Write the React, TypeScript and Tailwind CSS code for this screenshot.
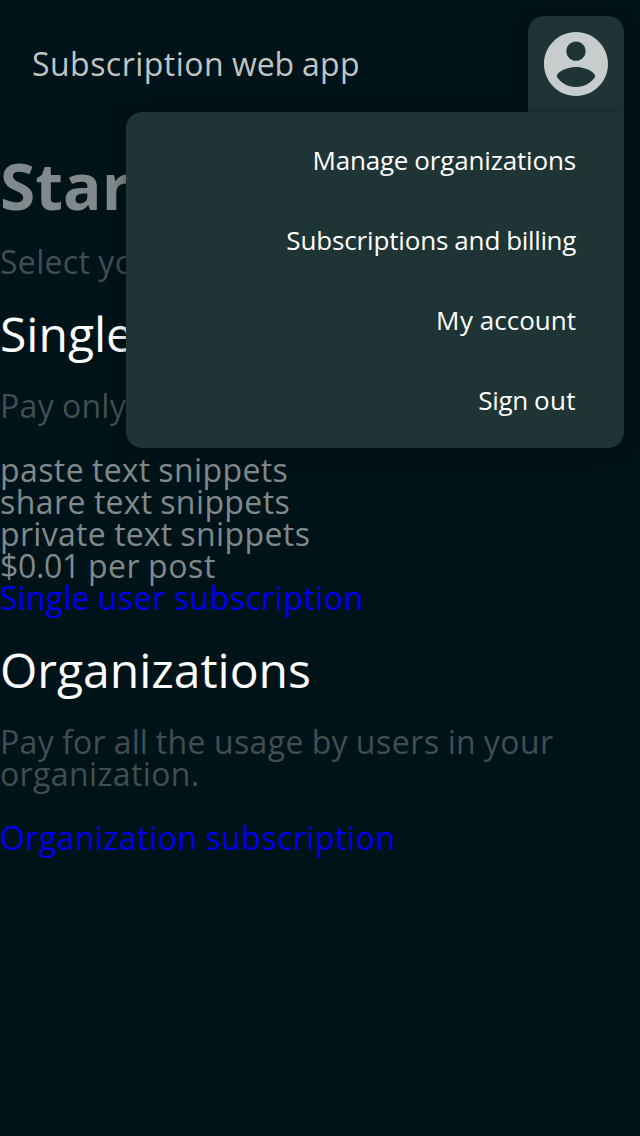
import { Fragment } from "react";

const items = ["Manage organizations", "Subscriptions and billing", "My account", "Sign out"];
const features = ["paste text snippets", "share text snippets", "private text snippets", "$0.01 per post"];

// Open Sans advance widths, in units of 1/2048 em.
const advances: Record<string, number> = {
  " ": 532, a: 1139, b: 1255, c: 975, d: 1255, e: 1149, f: 694, g: 1122, h: 1257, i: 518, j: 518,
  k: 1075, l: 518, m: 1905, n: 1257, o: 1237, p: 1255, q: 1255, r: 836, s: 977, t: 723, u: 1257,
  v: 1020, w: 1593, x: 1073, y: 1024, z: 961, S: 1124, P: 1233, O: 1610, M: 1849, "0": 1169,
  "1": 1169, $: 1169, ".": 545,
};

// Extra width a string takes when each glyph advance snaps to the two-pixel grid.
function snapExtra(text: string, size: number) {
  return [...text].reduce((sum, ch) => {
    const width = ((advances[ch] ?? 1024) * size) / 2048;
    return sum + Math.round(width / 2) * 2 - width;
  }, 0);
}

function Snapped({ text, size = 32 }: { text: string; size?: number }) {
  return (
    <span className="[font-kerning:none]" style={{ wordSpacing: `${snapExtra(" ", size)}px` }}>
      {text.split(" ").map((word, i) => (
        <Fragment key={i}>
          {i > 0 && " "}
          <span style={{ letterSpacing: `${snapExtra(word, size) / word.length}px` }}>{word}</span>
        </Fragment>
      ))}
    </span>
  );
}

function AccountMenu() {
  return (
    <div className="absolute top-4 right-4 flex flex-col items-end text-white">
      <button className="flex h-24 w-24 items-start justify-center rounded-t-2xl bg-[#1e3435] pt-4 shadow-[0_4px_16px_rgba(0,0,0,0.25)]">
        <svg viewBox="2 2 20 20" className="h-16 w-16 fill-[#c7cccc]">
          <path d="M12 2C6.48 2 2 6.48 2 12s4.48 10 10 10 10-4.48 10-10S17.52 2 12 2zm0 3c1.66 0 3 1.34 3 3s-1.34 3-3 3-3-1.34-3-3 1.34-3 3-3zm0 14.2c-2.5 0-4.71-1.28-6-3.22.03-1.99 4-3.08 6-3.08 1.99 0 5.97 1.09 6 3.08-1.29 1.94-3.5 3.22-6 3.22z" />
        </svg>
      </button>
      <ul className="flex w-[498px] flex-col rounded-b-2xl rounded-tl-2xl bg-[#1e3435] py-2 shadow-[0_4px_16px_rgba(0,0,0,0.4)]">
        {items.map((item) => (
          <li key={item} className="flex h-20 items-center justify-end pr-12 text-[26px] leading-8">
            <Snapped text={item} size={26} />
          </li>
        ))}
      </ul>
    </div>
  );
}

export default function App() {
  return (
    <div className="relative h-[1136px] w-[640px] overflow-hidden bg-[#001318] font-['Open_Sans',sans-serif] text-[32px] leading-8 text-[#80898b]">
      <header className="flex h-32 items-center pl-8 text-[#bfc4c5]">
        <Snapped text="Subscription web app" />
      </header>
      <main className="flex flex-col">
        <h1 className="pt-[22px] text-[64px] leading-[72px] font-bold">Start</h1>
        <p className="pt-6 text-[#404e52]"><Snapped text="Select your subscription" /></p>
        <h2 className="pt-8 text-[48px] leading-[48px] text-white">Single user</h2>
        <p className="pt-8 text-[#404e52]"><Snapped text="Pay only for your usage." /></p>
        <ul className="pt-8">
          {features.map((feature) => (
            <li key={feature}><Snapped text={feature} /></li>
          ))}
        </ul>
        <a className="text-[#0000ee]"><Snapped text="Single user subscription" /></a>
        <h2 className="pt-8 text-[48px] leading-[48px] text-white">Organizations</h2>
        <p className="pt-8 text-[#404e52]"><Snapped text="Pay for all the usage by users in your organization." /></p>
        <a className="pt-8 text-[#0000ee]"><Snapped text="Organization subscription" /></a>
      </main>
      <AccountMenu />
    </div>
  );
}
